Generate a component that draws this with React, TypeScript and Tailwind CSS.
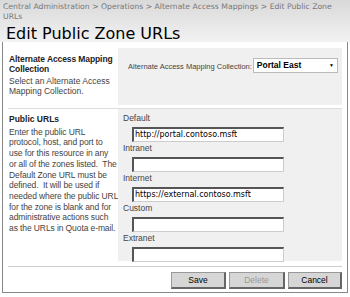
import React from "react";

const font = { fontFamily: '"Liberation Sans", Arial, sans-serif' };
const vfont = { fontFamily: '"DejaVu Sans", Verdana, sans-serif' };

function Field({ label, value }: { label: string; value?: string }) {
  return (
    <div className="flex flex-col">
      <div className="h-[15px] pl-[5px] text-[8.5px] leading-[12px] text-[#444]">{label}</div>
      <div className="ml-[14px] h-[15px] w-[152px] border border-t-[#555] border-l-[#555] border-r-[#ccc] border-b-[#ccc] border-t-2 border-l-2 bg-white pl-[1px] text-[8px] leading-[11px] text-black" style={vfont}>
        {value}
      </div>
    </div>
  );
}

const desc = [
  "Enter the public URL",
  "protocol, host, and port to",
  "use for this resource in any",
  "or all of the zones listed.\u00a0 The",
  "Default Zone URL must be",
  "defined.\u00a0 It will be used if",
  "needed where the public URL",
  "for the zone is blank and for",
  "administrative actions such",
  "as the URLs in Quota e-mail.",
];

export default function App() {
  return (
    <div className="h-[297px] w-[350px] overflow-hidden bg-white text-[#333]" style={font}>
      <div className="h-[42px] bg-gradient-to-b from-[#d9d9d9] to-[#f2f2f2] px-[3px] pt-[2px]" style={vfont}>
        <div className="text-[7.7px] leading-[10px] text-[#777]">
          Central Administration &gt; Operations &gt; Alternate Access Mappings &gt; Edit Public Zone URLs
        </div>
        <div className="mt-[2px] pl-[3px] text-[16px] leading-[20px] text-black">Edit Public Zone URLs</div>
      </div>
      <div className="mx-[2px] h-[251px] border-x border-b border-[#888] bg-white px-[5px] pt-[6px]">
        <div className="flex">
          <div className="w-[110px] shrink-0 pl-[1px] pt-[6px] text-[8.5px] leading-[10px]">
            <div className="font-bold tracking-[-0.1px] text-[#222]">Alternate Access Mapping Collection</div>
            <div className="mt-[2px] text-[#444]">Select an Alternate Access Mapping Collection.</div>
          </div>
          <div className="flex h-[57px] min-w-0 flex-1 items-start bg-[#f0f0f0] pl-[10px] pt-[10px] text-[#444]">
            <span className="mt-[3px] whitespace-nowrap text-[7.5px]">Alternate Access Mapping Collection:</span>
            <div className="ml-[1px] flex h-[15px] w-[85px] shrink-0 items-center justify-between border border-[#bbb] bg-white px-[3px] text-[8.5px] font-bold text-black">
              <span>Portal East</span>
              <span className="text-[5px] font-normal">▼</span>
            </div>
          </div>
        </div>
        <div className="h-[4px] border-b border-[#ddd]" />
        <div className="flex">
          <div className="w-[110px] shrink-0 pl-[1px] pt-[5px] text-[8.5px] leading-[10.7px]">
            <div className="font-bold text-[#222]">Public URLs</div>
            <div className="mt-[2px] whitespace-nowrap tracking-[-0.1px] text-[#444]">
              {desc.map((l) => (
                <div key={l}>{l}</div>
              ))}
            </div>
          </div>
          <div className="flex h-[152px] min-w-0 flex-1 flex-col bg-[#f0f0f0] pt-[3px]">
            <Field label="Default" value="http://portal.contoso.msft" />
            <Field label="Intranet" />
            <Field label="Internet" value="https://external.contoso.msft" />
            <Field label="Custom" />
            <Field label="Extranet" />
          </div>
        </div>
        <div className="mt-[5px] border-t border-[#ccc]" />
        <div className="mt-[5px] flex justify-end gap-[3px] text-[8.5px]">
          <div className="flex h-[17px] w-[55px] items-center justify-center border border-r-2 border-b-2 border-[#999] border-r-[#666] border-b-[#666] bg-[#d6d6d6] text-black">Save</div>
          <div className="flex h-[17px] w-[56px] items-center justify-center border border-r-2 border-b-2 border-[#999] border-r-[#666] border-b-[#666] bg-[#d6d6d6] text-[#999]">Delete</div>
          <div className="flex h-[17px] w-[54px] items-center justify-center border border-r-2 border-b-2 border-[#999] border-r-[#666] border-b-[#666] bg-[#d6d6d6] text-black">Cancel</div>
        </div>
      </div>
    </div>
  );
}
